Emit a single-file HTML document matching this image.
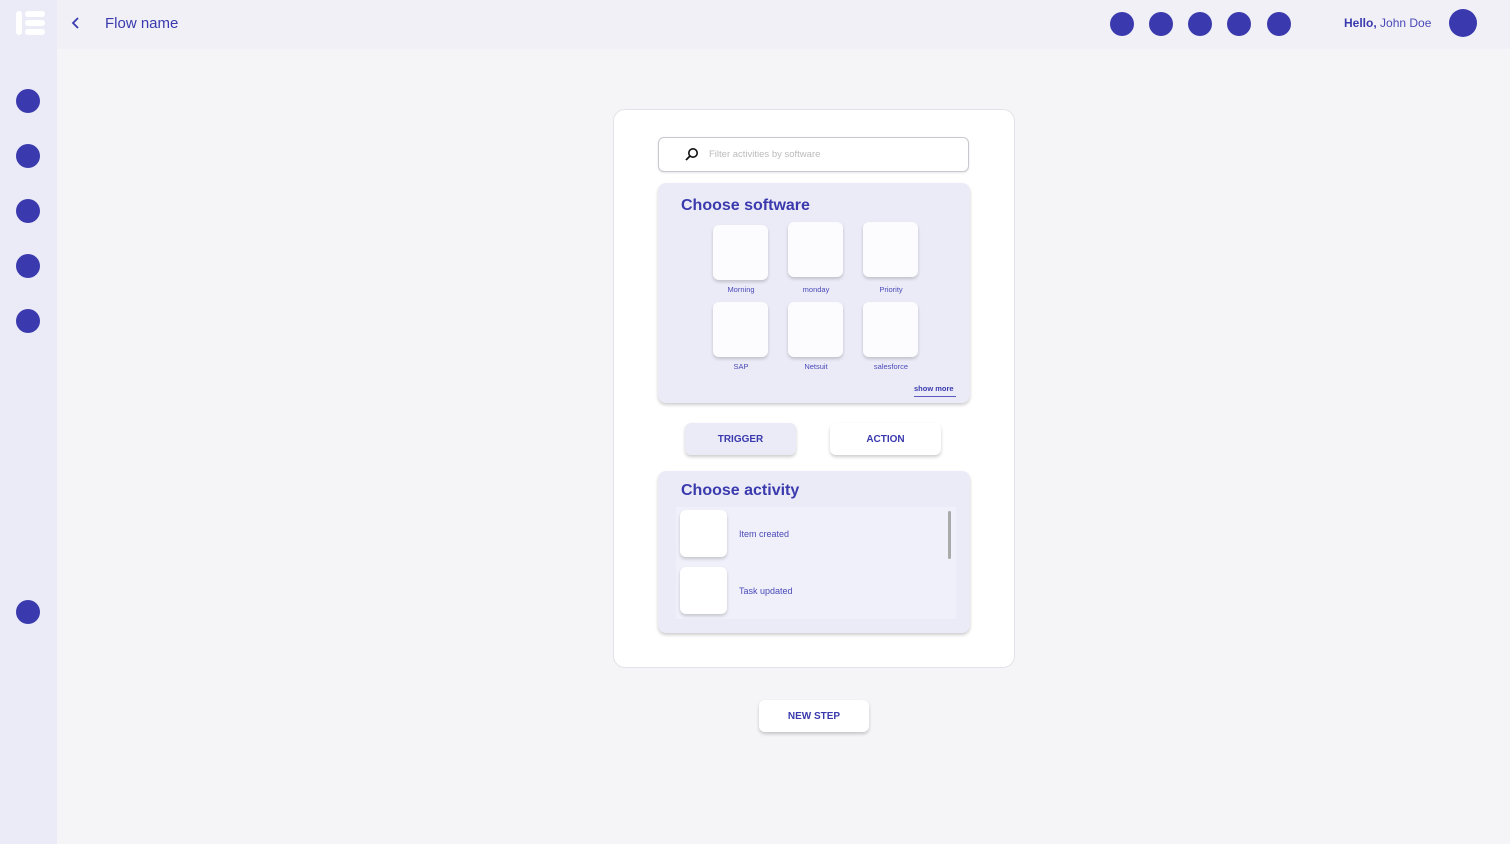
<!DOCTYPE html>
<html><head><style>
*{box-sizing:border-box;margin:0;padding:0}
body{width:1510px;height:844px;background:#f5f5f8;font-family:"Liberation Sans",sans-serif;position:relative;overflow:hidden;color:#3a3aae}
.side{position:absolute;left:0;top:0;width:57px;height:844px;background:#ebebf7}
.top{position:absolute;left:57px;top:0;width:1453px;height:49px;background:#f0f0f6}
.dot{position:absolute;border-radius:50%;background:#3a3aae}
.abs{position:absolute}
.card{position:absolute;left:613px;top:109px;width:402px;height:559px;background:#fff;border:1px solid #e2e2ea;border-radius:12px}
.search{position:absolute;left:658px;top:137px;width:311px;height:35px;border:1px solid #c8c8d0;border-radius:6px;background:#fff;box-shadow:0 1px 2px rgba(0,0,0,.1)}
.panel{position:absolute;background:#ebebf7;border-radius:8px;box-shadow:0 2px 3px rgba(0,0,0,.2)}
.tile{position:absolute;width:55px;height:55px;background:#fcfcfe;border-radius:6px;box-shadow:0 2px 3px rgba(0,0,0,.18)}
.lbl{position:absolute;width:80px;text-align:center;font-size:7.5px;color:#4a4ab8}
.btn{position:absolute;height:32px;border-radius:6px;box-shadow:0 2px 3px rgba(0,0,0,.2);font-size:10px;font-weight:bold;text-align:center;line-height:32px;color:#3a3aae}
h2{position:absolute;font-size:16px;font-weight:bold;color:#3a3aae}
</style></head><body>
<div class="side"></div>
<div class="top"></div>
<div class="abs" style="left:16px;top:11px;width:6px;height:24px;background:#fff;border-radius:3px"></div>
<div class="abs" style="left:25px;top:11px;width:20px;height:6px;background:#fff;border-radius:3px"></div>
<div class="abs" style="left:25px;top:20px;width:20px;height:6px;background:#fff;border-radius:3px"></div>
<div class="abs" style="left:25px;top:29px;width:20px;height:6px;background:#fff;border-radius:3px"></div>
<svg class="abs" style="left:70px;top:16px" width="12" height="14"><path d="M8 2 L3 7 L8 12" stroke="#3a3aae" stroke-width="1.8" fill="none"/></svg>
<div class="abs" style="left:105px;top:15px;font-size:15px;color:#3a3aae">Flow name</div>
<div class="dot" style="left:1110px;top:12px;width:24px;height:24px"></div>
<div class="dot" style="left:1149px;top:12px;width:24px;height:24px"></div>
<div class="dot" style="left:1188px;top:12px;width:24px;height:24px"></div>
<div class="dot" style="left:1227px;top:12px;width:24px;height:24px"></div>
<div class="dot" style="left:1267px;top:12px;width:24px;height:24px"></div>
<div class="abs" style="left:1344px;top:16px;font-size:12px;color:#3a3aae"><b style="font-weight:600">Hello,</b> <span style="color:#4a4ab8">John Doe</span></div>
<div class="dot" style="left:1449px;top:9px;width:28px;height:28px"></div>
<div class="dot" style="left:16px;top:89px;width:24px;height:24px"></div>
<div class="dot" style="left:16px;top:144px;width:24px;height:24px"></div>
<div class="dot" style="left:16px;top:199px;width:24px;height:24px"></div>
<div class="dot" style="left:16px;top:254px;width:24px;height:24px"></div>
<div class="dot" style="left:16px;top:309px;width:24px;height:24px"></div>
<div class="dot" style="left:16px;top:600px;width:24px;height:24px"></div>

<div class="card"></div>
<div class="search"></div>
<svg class="abs" style="left:684px;top:146px" width="16" height="16"><circle cx="9" cy="7" r="4.2" stroke="#111" stroke-width="1.6" fill="none"/><path d="M6 10 L2 14" stroke="#111" stroke-width="1.8"/></svg>
<div class="abs" style="left:709px;top:149px;font-size:9.5px;color:#bbb">Filter activities by software</div>

<div class="panel" style="left:658px;top:183px;width:312px;height:220px"></div>
<h2 style="left:681px;top:197px">Choose software</h2>
<div class="tile" style="left:713px;top:225px"></div>
<div class="tile" style="left:788px;top:222px"></div>
<div class="tile" style="left:863px;top:222px"></div>
<div class="lbl" style="left:701px;top:285px">Morning</div>
<div class="lbl" style="left:776px;top:285px">monday</div>
<div class="lbl" style="left:851px;top:285px">Priority</div>
<div class="tile" style="left:713px;top:302px"></div>
<div class="tile" style="left:788px;top:302px"></div>
<div class="tile" style="left:863px;top:302px"></div>
<div class="lbl" style="left:701px;top:362px">SAP</div>
<div class="lbl" style="left:776px;top:362px">Netsuit</div>
<div class="lbl" style="left:851px;top:362px">salesforce</div>
<div class="abs" style="left:914px;top:384px;font-size:7.5px;font-weight:bold;color:#3a3aae">show more</div>
<div class="abs" style="left:914px;top:396px;width:42px;height:1px;background:#5a5ac0"></div>

<div class="btn" style="left:685px;top:423px;width:111px;background:#ebebf7;line-height:33px">TRIGGER</div>
<div class="btn" style="left:830px;top:423px;width:111px;background:#fff;line-height:33px">ACTION</div>

<div class="panel" style="left:658px;top:471px;width:312px;height:162px"></div>
<h2 style="left:681px;top:482px">Choose activity</h2>
<div class="abs" style="left:676px;top:507px;width:280px;height:112px;background:#f0f0fa"></div>
<div class="abs" style="left:948px;top:511px;width:3px;height:48px;background:#aaa;border-radius:2px"></div>
<div class="tile" style="left:680px;top:510px;width:47px;height:47px;background:#fff"></div>
<div class="tile" style="left:680px;top:567px;width:47px;height:47px;background:#fff"></div>
<div class="abs" style="left:739px;top:529px;font-size:9px;color:#4a4ab8">Item created</div>
<div class="abs" style="left:739px;top:586px;font-size:9px;color:#4a4ab8">Task updated</div>

<div class="btn" style="left:759px;top:700px;width:110px;background:#fff;line-height:33px">NEW STEP</div>
</body></html>
